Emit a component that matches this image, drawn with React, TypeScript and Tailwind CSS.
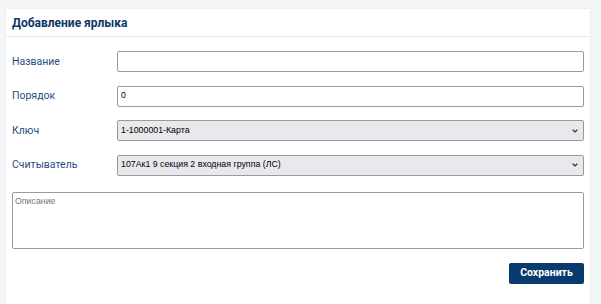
import { ChevronDown } from "lucide-react";

type Field = {
    label: string;
    kind: "input" | "select";
    value: string;
};

const fields: Field[] = [
    { label: "Название", kind: "input", value: "" },
    { label: "Порядок", kind: "input", value: "0" },
    { label: "Ключ", kind: "select", value: "1-1000001-Карта" },
    { label: "Считыватель", kind: "select", value: "107Ак1 9 секция 2 входная группа (ЛС)" },
];

function FieldRow({ f }: { f: Field }) {
    return (
        <div className="flex h-[21px] items-center">
            <label className="w-[105px] shrink-0 text-[10.5px] text-[#1e4f82]">{f.label}</label>
            {f.kind === "input" ? (
                <div className="flex h-full flex-1 items-center rounded-[2px] border border-[#9a9a9a] bg-white px-[3px] font-['Liberation_Sans',sans-serif] text-[8.8px] text-black">
                    {f.value}
                </div>
            ) : (
                <div className="flex h-full flex-1 items-center justify-between rounded-[2px] border border-[#9a9a9a] bg-[#e9e8ed] pl-[3px] pr-[4px] font-['Liberation_Sans',sans-serif] text-[8.8px] text-black">
                    <span>{f.value}</span>
                    <ChevronDown size={8} strokeWidth={3.5} className="text-[#333]" />
                </div>
            )}
        </div>
    );
}

export default function App() {
    return (
        <div className="h-[304px] w-[601px] bg-[#f4f5f7] pl-[6px] pr-[11px] pt-[9px] font-['Roboto',sans-serif]">
            <div className="h-full bg-white shadow-[0_0_2px_rgba(0,0,0,0.08)]">
                <div className="flex h-[28px] items-center border-b border-[#ececee] px-[6px]">
                    <h2 className="text-[12px] font-bold text-[#0d3766]">Добавление ярлыка</h2>
                </div>
                <div className="flex flex-col gap-[13.5px] px-[6px] pt-[14px]">
                    {fields.map((f) => (
                        <FieldRow key={f.label} f={f} />
                    ))}
                    <div className="mt-[3px] h-[57px] rounded-[2px] border border-[#9a9a9a] px-[2px] pt-[2px] font-['Liberation_Sans',sans-serif] text-[8.8px] text-[#777]">
                        Описание
                    </div>
                    <div className="flex justify-end">
                        <button className="h-[21px] w-[75px] rounded-[2px] bg-[#083a6e] text-[10.5px] font-bold text-white">
                            Сохранить
                        </button>
                    </div>
                </div>
            </div>
        </div>
    );
}
